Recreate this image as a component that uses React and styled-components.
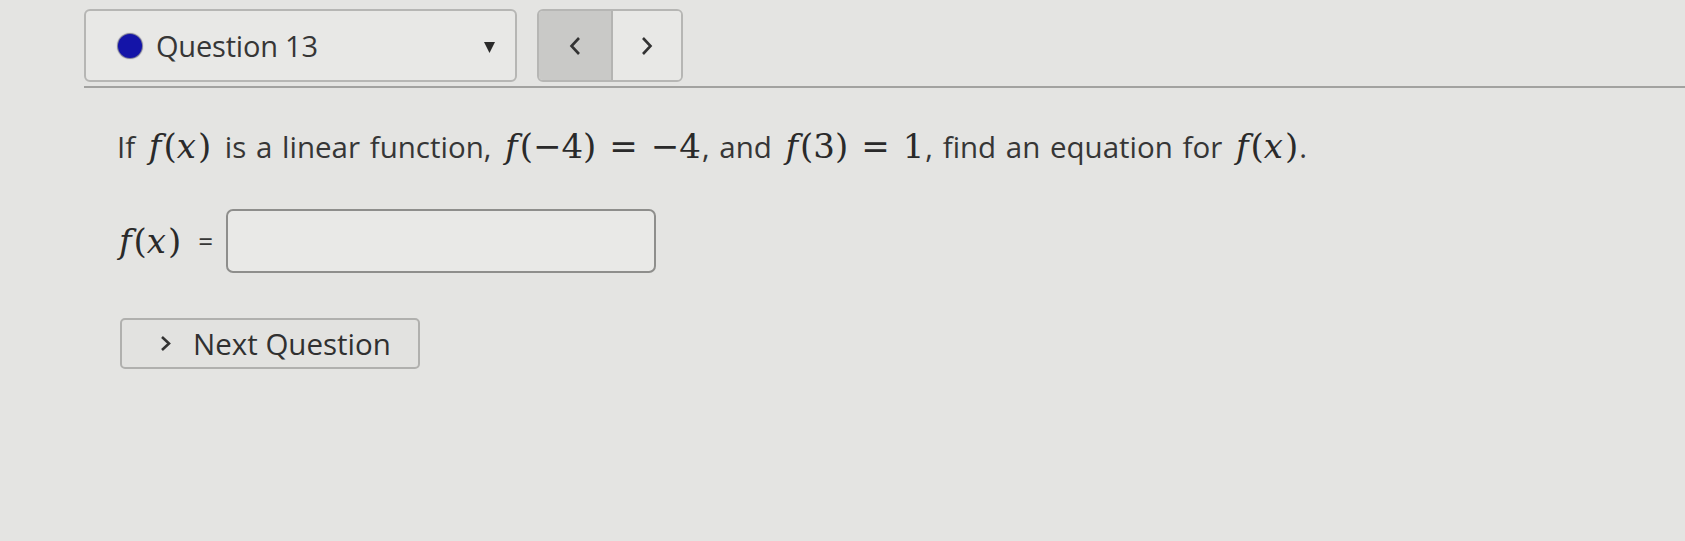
import React from "react";
import styled, { createGlobalStyle } from "styled-components";

const Global = createGlobalStyle`
  html, body { margin: 0; padding: 0; background: #e4e4e2; }
  body { font-family: "Open Sans", "Liberation Sans", sans-serif; color: #363636; }
`;

const Page = styled.div`
  width: 1685px;
  height: 541px;
  box-sizing: border-box;
  padding: 9px 0 0 84px;
  background: #e4e4e2;
  overflow: hidden;
`;

const TopBar = styled.div`
  display: flex;
  gap: 20px;
  height: 73px;
`;

const Select = styled.div`
  box-sizing: border-box;
  width: 433px;
  height: 100%;
  display: flex;
  align-items: center;
  padding: 0 20px 0 32px;
  border: 2px solid #b6b6b4;
  border-radius: 6px;
  background: #e8e8e6;
`;

const Dot = styled.span`
  width: 24px;
  height: 24px;
  border-radius: 50%;
  background: #1414a8;
  box-shadow: 0 0 1px 1px rgba(0, 0, 60, 0.5);
  flex: none;
`;

const SelectLabel = styled.span`
  margin-left: 14px;
  font-size: 29px;
  letter-spacing: -0.2px;
  color: #363636;
  flex: 1;
`;

const Caret = styled.svg`
  width: 11px;
  height: 11px;
  flex: none;
  margin-top: 4px;
`;

const Pager = styled.div`
  box-sizing: border-box;
  width: 146px;
  height: 100%;
  display: flex;
  border: 2px solid #b6b6b4;
  border-radius: 6px;
  overflow: hidden;
`;

const PageBtn = styled.div`
  flex: ${(p) => (p.$dim ? "0 0 72px" : "1")};
  display: flex;
  align-items: center;
  justify-content: center;
  background: ${(p) => (p.$dim ? "#c9c9c7" : "#e8e8e6")};
  border-right: ${(p) => (p.$dim ? "2px solid #b4b4b2" : "none")};
`;

const Chevron = styled.svg`
  width: 12px;
  height: 20px;
`;

const Rule = styled.div`
  height: 2px;
  margin-top: 4px;
  background: #a2a2a0;
`;

const Content = styled.div`
  padding-left: 33px;
`;

const Question = styled.p`
  margin: 38px 0 0;
  font-size: 29.5px;
  line-height: 40px;
  color: #363636;
  white-space: nowrap;
  word-spacing: 2px;
`;

const MathSpan = styled.span`
  display: inline-block;
  margin-left: ${(p) => (p.$tight ? "0" : "4px")};
  margin-right: ${(p) => (p.$tight || p.$punct ? "1px" : "4px")};
  font-family: "DejaVu Serif", "Liberation Serif", serif;
  font-size: 34px;
  line-height: 40px;
  color: #2a2a2a;
  word-spacing: 0;
`;

const MI = styled.span`
  font-style: italic;
  margin-right: 2px;
`;

const Rel = styled.span`
  margin: 0 13px;
`;

const AnswerRow = styled.div`
  margin-top: 42px;
  display: flex;
  align-items: center;
  height: 64px;
  margin-left: 2px;
`;

const Eq = styled.span`
  font-size: 26px;
  margin: 0 13px 0 16px;
  color: #363636;
`;

const Input = styled.div`
  box-sizing: border-box;
  width: 430px;
  height: 64px;
  border: 2px solid #8e8e8c;
  border-radius: 7px;
  background: #e9e9e7;
`;

const NextButton = styled.div`
  box-sizing: border-box;
  margin-top: 45px;
  margin-left: 3px;
  width: 300px;
  height: 51px;
  display: flex;
  align-items: center;
  padding-left: 38px;
  gap: 22px;
  border: 2px solid #b0b0ae;
  border-radius: 5px;
  background: #e2e2e0;
  font-size: 29.5px;
  color: #303030;
`;

const SmallChevron = styled.svg`
  width: 11px;
  height: 17px;
`;

const Fn = ({ children }) => (
  <>
    <MI>f</MI>({children})
  </>
);

export default function App() {
  return (
    <>
      <Global />
      <Page>
        <TopBar>
          <Select>
            <Dot />
            <SelectLabel>Question 13</SelectLabel>
            <Caret viewBox="0 0 11 11">
              <path d="M0 0 H11 L5.5 11 Z" fill="#2a2a2a" />
            </Caret>
          </Select>
          <Pager>
            <PageBtn $dim>
              <Chevron viewBox="0 0 12 20">
                <path d="M10 2 L2.5 10 L10 18" fill="none" stroke="#333" strokeWidth="2.6" />
              </Chevron>
            </PageBtn>
            <PageBtn>
              <Chevron viewBox="0 0 12 20">
                <path d="M2 2 L9.5 10 L2 18" fill="none" stroke="#333" strokeWidth="2.6" />
              </Chevron>
            </PageBtn>
          </Pager>
        </TopBar>
        <Rule />
        <Content>
          <Question>
            If{" "}
            <MathSpan>
              <Fn><MI>x</MI></Fn>
            </MathSpan>{" "}
            is a linear function,{" "}
            <MathSpan $punct>
              <Fn>−4</Fn>
              <Rel>=</Rel>−4
            </MathSpan>
            , and{" "}
            <MathSpan $punct>
              <Fn>3</Fn>
              <Rel>=</Rel>1
            </MathSpan>
            , find an equation for{" "}
            <MathSpan $punct>
              <Fn><MI>x</MI></Fn>
            </MathSpan>
            .
          </Question>
          <AnswerRow>
            <MathSpan $tight>
              <Fn><MI>x</MI></Fn>
            </MathSpan>
            <Eq>=</Eq>
            <Input />
          </AnswerRow>
          <NextButton>
            <SmallChevron viewBox="0 0 11 17">
              <path d="M2 2 L9 8.5 L2 15" fill="none" stroke="#333" strokeWidth="2.6" />
            </SmallChevron>
            Next Question
          </NextButton>
        </Content>
      </Page>
    </>
  );
}
